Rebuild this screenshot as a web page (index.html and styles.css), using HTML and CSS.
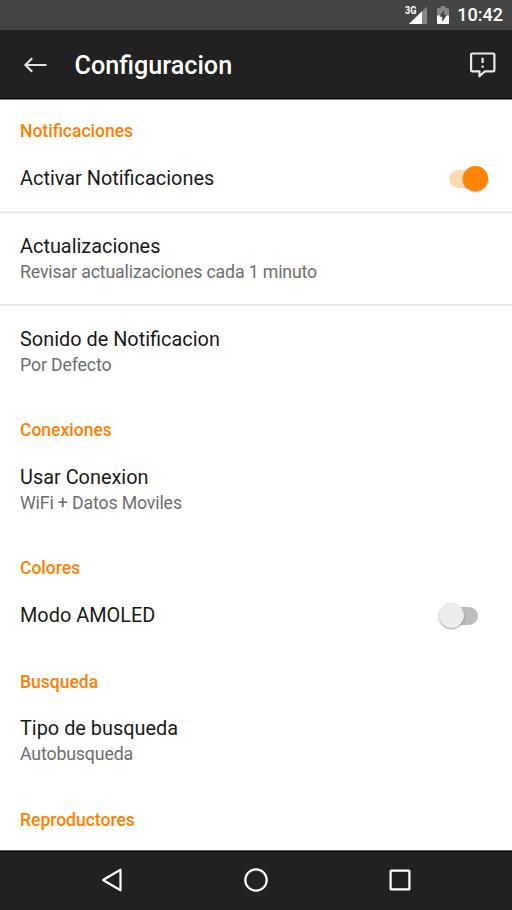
FILE: index.html
```
<!DOCTYPE html>
<html lang="es">
<head>
<meta charset="utf-8">
<title>Configuracion</title>
<link rel="stylesheet" href="styles.css">
</head>
<body>
<div class="screen">
  <div class="status">
    <svg class="signal" width="22" height="20" viewBox="0 0 22 20">
      <path d="M4 19L22 1.5V19Z" fill="#868686"/>
      <path d="M4 19L17 6.3V19Z" fill="#fff"/>
      <text x="0" y="9" class="net" textLength="11.5" lengthAdjust="spacingAndGlyphs">3G</text>
    </svg>
    <svg class="battery" width="12" height="18" viewBox="0 0 12 18">
      <path d="M0 3Q0 2 1 2H3.7V0H8.3V2H11Q12 2 12 3V10H0Z" fill="#858585"/>
      <path d="M0 9.5H12V17Q12 18 11 18H1Q0 18 0 17Z" fill="#fff"/>
      <path d="M7 4L2.5 10.8H5.2V16L9.7 9.1H7Z" fill="#424242"/>
    </svg>
    <span class="clock">10:42</span>
  </div>
  <header class="toolbar">
    <svg class="back" width="24" height="18" viewBox="0 0 24 18" fill="none" stroke="#e2e2e2" stroke-width="2.2">
      <path d="M9.2 2.2L2.4 9L9.2 15.8M2.4 9H23.5"/>
    </svg>
    <h1>Configuracion</h1>
    <svg class="feedback" width="26" height="26" viewBox="0 0 26 26" fill="none" stroke="#e8e8e8" stroke-width="2.2" stroke-linejoin="round">
      <path d="M2.2 1.5H23.3Q24.4 1.5 24.4 2.6V18.2Q24.4 19.3 23.3 19.3H15L9.5 24.3V19.3H2.2Q1.1 19.3 1.1 18.2V2.6Q1.1 1.5 2.2 1.5Z"/>
      <path d="M12.6 5.7V11M12.6 13.4V15.8"/>
    </svg>
  </header>
  <main class="list">
    <h2>Notificaciones</h2>
    <div class="row ruled"><span class="title">Activar Notificaciones</span><span class="switch on"></span></div>
    <div class="row double ruled thick"><span class="title">Actualizaciones</span><span class="summary">Revisar actualizaciones cada 1 minuto</span></div>
    <div class="row double"><span class="title">Sonido de Notificacion</span><span class="summary">Por Defecto</span></div>
    <h2>Conexiones</h2>
    <div class="row double"><span class="title">Usar Conexion</span><span class="summary">WiFi + Datos Moviles</span></div>
    <h2>Colores</h2>
    <div class="row"><span class="title">Modo AMOLED</span><span class="switch"></span></div>
    <h2>Busqueda</h2>
    <div class="row double"><span class="title">Tipo de busqueda</span><span class="summary">Autobusqueda</span></div>
    <h2>Reproductores</h2>
  </main>
  <nav class="nav">
    <svg width="26" height="26" viewBox="0 0 26 26"><path d="M4 13L21.5 2.7V23.3Z"/></svg>
    <svg width="26" height="26" viewBox="0 0 26 26"><circle cx="13" cy="13" r="10.7"/></svg>
    <svg width="26" height="26" viewBox="0 0 26 26"><rect x="3.6" y="3.6" width="18.8" height="18.8" rx=".5"/></svg>
  </nav>
</div>
</body>
</html>
```
FILE: styles.css
```
* { box-sizing: border-box; }
body { margin: 0; background: #fff; font-family: Roboto, sans-serif; }
.screen { width: 512px; height: 910px; display: flex; flex-direction: column; overflow: hidden; }
.status { height: 30px; flex: none; background: #444; display: flex; align-items: center; padding-right: 9px; justify-content: flex-end; }
.signal { margin-right: 10px; }
.net { font: 700 10px Roboto, sans-serif; fill: #fff; }
.battery { margin-right: 8px; }
.signal, .battery { overflow: visible; }
.clock { color: #fff; font-size: 18px; font-weight: 500; line-height: 30px; }
.toolbar { height: 70px; flex: none; background: #212121; border-bottom: 1px solid #858585; box-shadow: inset 0 -1px #050505; display: flex; align-items: center; padding: 1px 16px 0 23px; }
h1 { margin: 0 auto 0 27.5px; padding-top: 1px; color: #fff; font-size: 25.2px; font-weight: 500; line-height: 32px; }
.list { flex: 1; min-height: 0; overflow: hidden; }
h2 { margin: 0; height: 45.5px; padding: 20px 20px 0; color: #ff8000; font-size: 17.5px; font-weight: 500; line-height: 25px; }
h2:first-child { height: 45px; padding-top: 19px; }
.row { height: 68.3px; padding: 0 24px 0 20px; display: flex; align-items: center; justify-content: space-between; }
.row.double { height: 92.4px; flex-direction: column; align-items: flex-start; justify-content: center; }
.ruled { box-shadow: inset 0 -1px #e0e0e0; }
.ruled.thick { box-shadow: inset 0 -2px #e9e9e9; }
.title { color: #191919; font-size: 19.9px; line-height: 26px; }
.double .title { padding-top: 1px; margin-bottom: -1px; }
.summary { color: #6e6e6e; font-size: 17.75px; line-height: 26px; letter-spacing: -.155px; }
.switch { position: relative; width: 50px; height: 28px; }
.switch::before { content: ""; position: absolute; left: 12px; top: 5px; width: 28px; height: 18px; border-radius: 9px; background: #bdbdbd; }
.switch::after { content: ""; position: absolute; left: 1px; top: 1px; width: 25px; height: 25px; border-radius: 50%; background: #ececec; box-shadow: 0 1px 2px rgba(0,0,0,.4); }
.switch.on::before { left: 11px; background: #ffd9b2; }
.switch.on::after { left: 25px; background: #ff8500; }
.nav { height: 60px; flex: none; background: #212121; border-top: 1px solid #666; box-shadow: inset 0 1px #050505; display: flex; justify-content: space-between; align-items: center; padding: 0 99px 1px; }
.nav svg { fill: none; stroke: #fff; stroke-width: 2.2; stroke-linejoin: round; }
```
